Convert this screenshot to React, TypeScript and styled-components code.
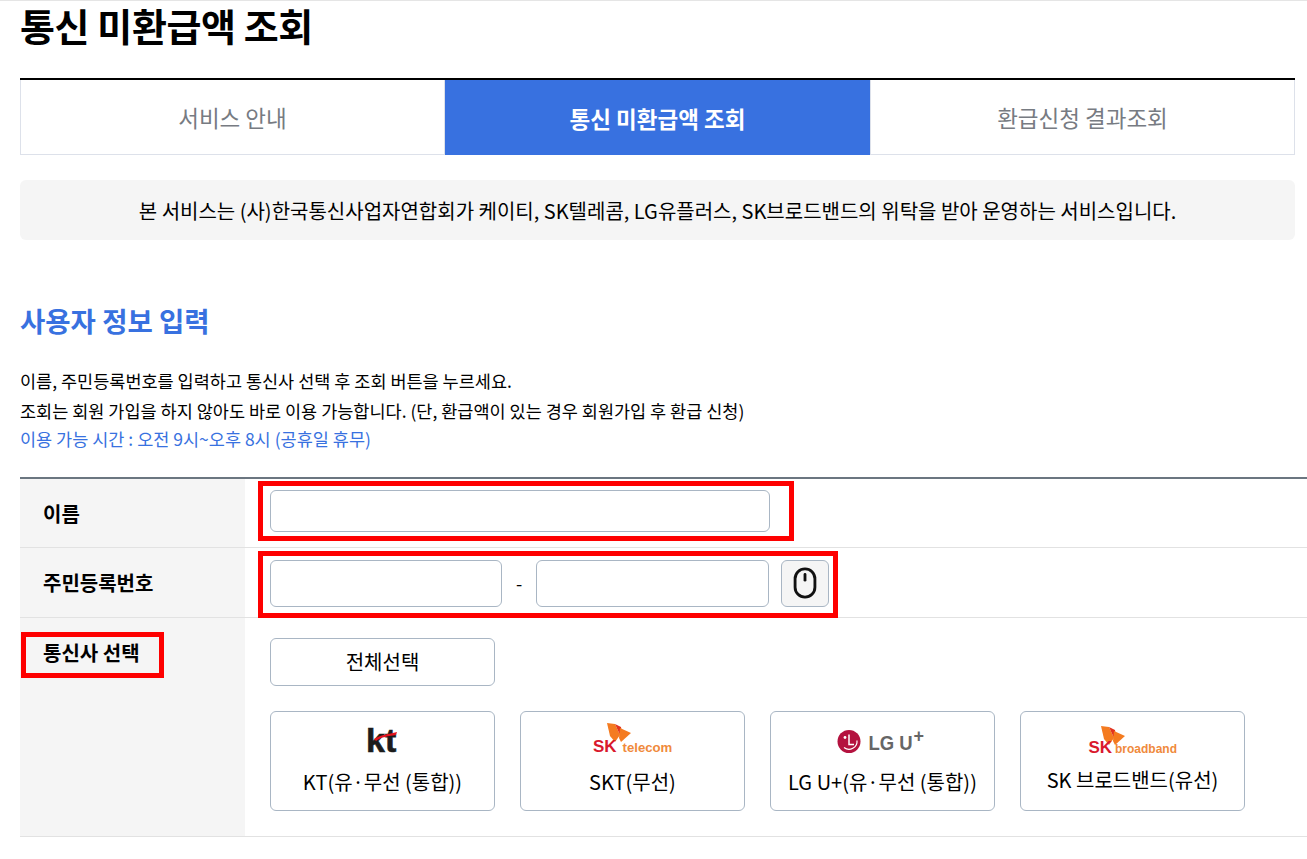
import React from 'react';
import styled, { createGlobalStyle } from 'styled-components';
import { Mouse } from 'lucide-react';

const GlobalStyle = createGlobalStyle`
  html, body {
    margin: 0;
    padding: 0;
    background: #fff;
  }
  * {
    box-sizing: border-box;
  }
  body {
    font-family: "Noto Sans CJK KR", "Noto Sans", sans-serif;
    color: #000;
  }
`;

const Page = styled.div`
  width: 1307px;
  height: 859px;
  padding: 0 12px 0 20px;
  border-top: 1px solid #e5e5e5;
  overflow: hidden;
`;

const Title = styled.h1`
  margin: 0;
  height: 77px;
  font-size: 38px;
  line-height: 48px;
  font-weight: 700;
  letter-spacing: -0.4px;
`;

const Tabs = styled.div`
  display: grid;
  grid-template-columns: repeat(3, 425px);
  border-top: 2px solid #000;
`;

const Tab = styled.div<{ $active?: boolean }>`
  height: 75px;
  display: flex;
  align-items: center;
  justify-content: center;
  font-size: 22.5px;
  font-weight: ${p => (p.$active ? 700 : 400)};
  color: ${p => (p.$active ? '#fff' : '#777b82')};
  background: ${p => (p.$active ? '#3871e0' : '#fff')};
  border: ${p => (p.$active ? 'none' : '1px solid #dde1ea')};
  border-top: none;
`;

const Notice = styled.div`
  margin-top: 25px;
  height: 60px;
  width: 1275px;
  display: flex;
  align-items: center;
  justify-content: center;
  background: #f5f5f5;
  border-radius: 6px;
  font-size: 20px;
`;

const SectionTitle = styled.h2`
  margin: 59px 0 0;
  height: 42px;
  font-size: 27.5px;
  line-height: 42px;
  font-weight: 700;
  color: #3871e0;
`;

const Guide = styled.div`
  margin-top: 25px;
  font-size: 17.5px;
  line-height: 29.5px;
`;

const GuideNote = styled.div`
  margin-top: -1px;
  color: #3871e0;
`;

const Table = styled.div`
  margin-top: 23px;
  width: 1287px;
  border-top: 2px solid #6b7680;
`;

const Row = styled.div<{ $height: number }>`
  display: grid;
  grid-template-columns: 225px 1fr;
  height: ${p => p.$height}px;
  border-bottom: 1px solid #e2e2e2;
`;

const Label = styled.div<{ $top?: boolean; $nudge?: number }>`
  position: relative;
  background: #f5f5f5;
  padding: ${p => (p.$top ? '20px 0 0 23px' : `${p.$nudge ?? 0}px 0 0 23px`)};
  display: flex;
  align-items: ${p => (p.$top ? 'flex-start' : 'center')};
  font-size: 20px;
  font-weight: 700;
`;

const Cell = styled.div<{ $top?: boolean; $nudge?: number }>`
  position: relative;
  padding-left: 25px;
  display: ${p => (p.$top ? 'block' : 'flex')};
  align-items: center;
  padding-top: ${p => (p.$top ? '20px' : `${Math.max(p.$nudge ?? 0, 0)}px`)};
  padding-bottom: ${p => Math.max(-(p.$nudge ?? 0), 0)}px;
`;

const TextField = styled.input<{ $width: number; $height: number }>`
  width: ${p => p.$width}px;
  height: ${p => p.$height}px;
  border: 1px solid #a9b6c4;
  border-radius: 6px;
  background: #fff;
  outline: none;
`;

const Dash = styled.span`
  width: 34px;
  text-align: center;
  font-size: 18px;
`;

const KeypadButton = styled.button`
  margin-left: 12px;
  width: 48px;
  height: 47px;
  padding: 0;
  display: flex;
  align-items: center;
  justify-content: center;
  background: #f5f5f5;
  border: 1px solid #a9b6c4;
  border-radius: 6px;
  color: #111;
`;

const RedBox = styled.div<{ $left: number; $top: number; $width: number; $height: number }>`
  position: absolute;
  left: ${p => p.$left}px;
  top: ${p => p.$top}px;
  width: ${p => p.$width}px;
  height: ${p => p.$height}px;
  border: 5px solid #fe0000;
  pointer-events: none;
`;

const SelectAll = styled.button`
  display: block;
  width: 225px;
  height: 48px;
  padding: 0;
  background: #fff;
  border: 1px solid #a9b6c4;
  border-radius: 6px;
  font-family: inherit;
  font-size: 20px;
  color: #000;
`;

const Carriers = styled.div`
  margin-top: 25px;
  display: flex;
  gap: 25px;
`;

const Carrier = styled.button`
  width: 225px;
  height: 100px;
  padding: 8px 0 0;
  display: flex;
  flex-direction: column;
  align-items: center;
  background: #fff;
  border: 1px solid #a9b6c4;
  border-radius: 6px;
  font-family: inherit;
  font-size: 20px;
  line-height: 28px;
  color: #000;
`;

const LogoSlot = styled.span<{ $height: number }>`
  display: block;
  height: ${p => p.$height}px;
`;

const LogoSvg = ({ children }: { children: React.ReactNode }) => (
  <svg width="100" height="40" viewBox="0 0 100 40" style={{ display: 'block' }}>
    {children}
  </svg>
);

const Wings = ({ x, y }: { x: number; y: number }) => (
  <g transform={`translate(${x} ${y})`}>
    <path d="M0 0 L8 1 L13 12 L8 19 L3 13 Z" fill="#f47b20" />
    <path d="M8 1 L14 4 L15 11 L13 12 Z" fill="#e2331f" />
    <path d="M13 5 L24 10 L14 19 L12 15 Z" fill="#f47b20" />
  </g>
);

const KtLogo = () => (
  <LogoSvg>
    <text x="33" y="32" fontFamily="'Liberation Sans', sans-serif" fontWeight="700" fontSize="34" fill="#1c1c1c" stroke="#1c1c1c" strokeWidth="0.6">kt</text>
    <path d="M41 19 C47 15 56 14 64 12 L63 15 C56 16 48 17 43 21 Z" fill="#e4141e" />
  </LogoSvg>
);

const SktLogo = () => (
  <LogoSvg>
    <Wings x={24} y={3} />
    <text x="10" y="32" fontFamily="'Liberation Sans', sans-serif" fontWeight="700" fontSize="17" fill="#d9182d">SK</text>
    <text x="39.5" y="32" fontFamily="'Liberation Sans', sans-serif" fontWeight="700" fontSize="13.2" fill="#f08a3c">telecom</text>
  </LogoSvg>
);

const LguLogo = () => (
  <LogoSvg>
    <circle cx="16" cy="21.5" r="11.5" fill="#b4123f" />
    <circle cx="12" cy="17.5" r="1.4" fill="#fff" />
    <path d="M16 14.5 V24.5 H21" stroke="#fff" strokeWidth="1.5" fill="none" />
    <path d="M11 27.5 A8 8 0 0 0 24 20.5" stroke="#fff" strokeWidth="1.2" fill="none" />
    <text transform="translate(35.5 30) scale(1 1.08)" fontFamily="'Liberation Sans', sans-serif" fontWeight="700" fontSize="18.5" fill="#666">LG U</text>
    <text x="80.5" y="22" fontFamily="'Liberation Sans', sans-serif" fontWeight="700" fontSize="18" fill="#666">+</text>
  </LogoSvg>
);

const SkbLogo = () => (
  <LogoSvg>
    <Wings x={18} y={6} />
    <text x="5.5" y="33" fontFamily="'Liberation Sans', sans-serif" fontWeight="700" fontSize="17" fill="#d9182d">SK</text>
    <text x="32" y="33" fontFamily="'Liberation Sans', sans-serif" fontWeight="700" fontSize="12" fill="#f08a3c">broadband</text>
  </LogoSvg>
);

const App = () => (
  <Page>
    <GlobalStyle />
    <Title>통신 미환급액 조회</Title>
    <Tabs>
      <Tab>서비스 안내</Tab>
      <Tab $active>통신 미환급액 조회</Tab>
      <Tab>환급신청 결과조회</Tab>
    </Tabs>
    <Notice>본 서비스는 (사)한국통신사업자연합회가 케이티, SK텔레콤, LG유플러스, SK브로드밴드의 위탁을 받아 운영하는 서비스입니다.</Notice>
    <SectionTitle>사용자 정보 입력</SectionTitle>
    <Guide>
      <div>이름, 주민등록번호를 입력하고 통신사 선택 후 조회 버튼을 누르세요.</div>
      <div>조회는 회원 가입을 하지 않아도 바로 이용 가능합니다. (단, 환급액이 있는 경우 회원가입 후 환급 신청)</div>
      <GuideNote>이용 가능 시간 : 오전 9시~오후 8시 (공휴일 휴무)</GuideNote>
    </Guide>
    <Table>
      <Row $height={69}>
        <Label $nudge={2}>이름</Label>
        <Cell $nudge={-4}>
          <TextField $width={500} $height={42} />
          <RedBox $left={13} $top={2} $width={536} $height={60} />
        </Cell>
      </Row>
      <Row $height={70}>
        <Label>주민등록번호</Label>
        <Cell $nudge={2}>
          <TextField $width={232} $height={47} />
          <Dash>-</Dash>
          <TextField $width={233} $height={47} />
          <KeypadButton aria-label="보안 키패드">
            <Mouse size={34} strokeWidth={2} />
          </KeypadButton>
          <RedBox $left={13} $top={3} $width={580} $height={67} />
        </Cell>
      </Row>
      <Row $height={219}>
        <Label $top>
          통신사 선택
          <RedBox $left={1} $top={14} $width={143} $height={46} />
        </Label>
        <Cell $top>
          <SelectAll>전체선택</SelectAll>
          <Carriers>
            <Carrier>
              <LogoSlot $height={48}><KtLogo /></LogoSlot>
              <span>KT(유·무선 (통합))</span>
            </Carrier>
            <Carrier>
              <LogoSlot $height={48}><SktLogo /></LogoSlot>
              <span>SKT(무선)</span>
            </Carrier>
            <Carrier>
              <LogoSlot $height={48}><LguLogo /></LogoSlot>
              <span>LG U+(유·무선 (통합))</span>
            </Carrier>
            <Carrier>
              <LogoSlot $height={46}><SkbLogo /></LogoSlot>
              <span>SK 브로드밴드(유선)</span>
            </Carrier>
          </Carriers>
        </Cell>
      </Row>
    </Table>
  </Page>
);

export default App;
